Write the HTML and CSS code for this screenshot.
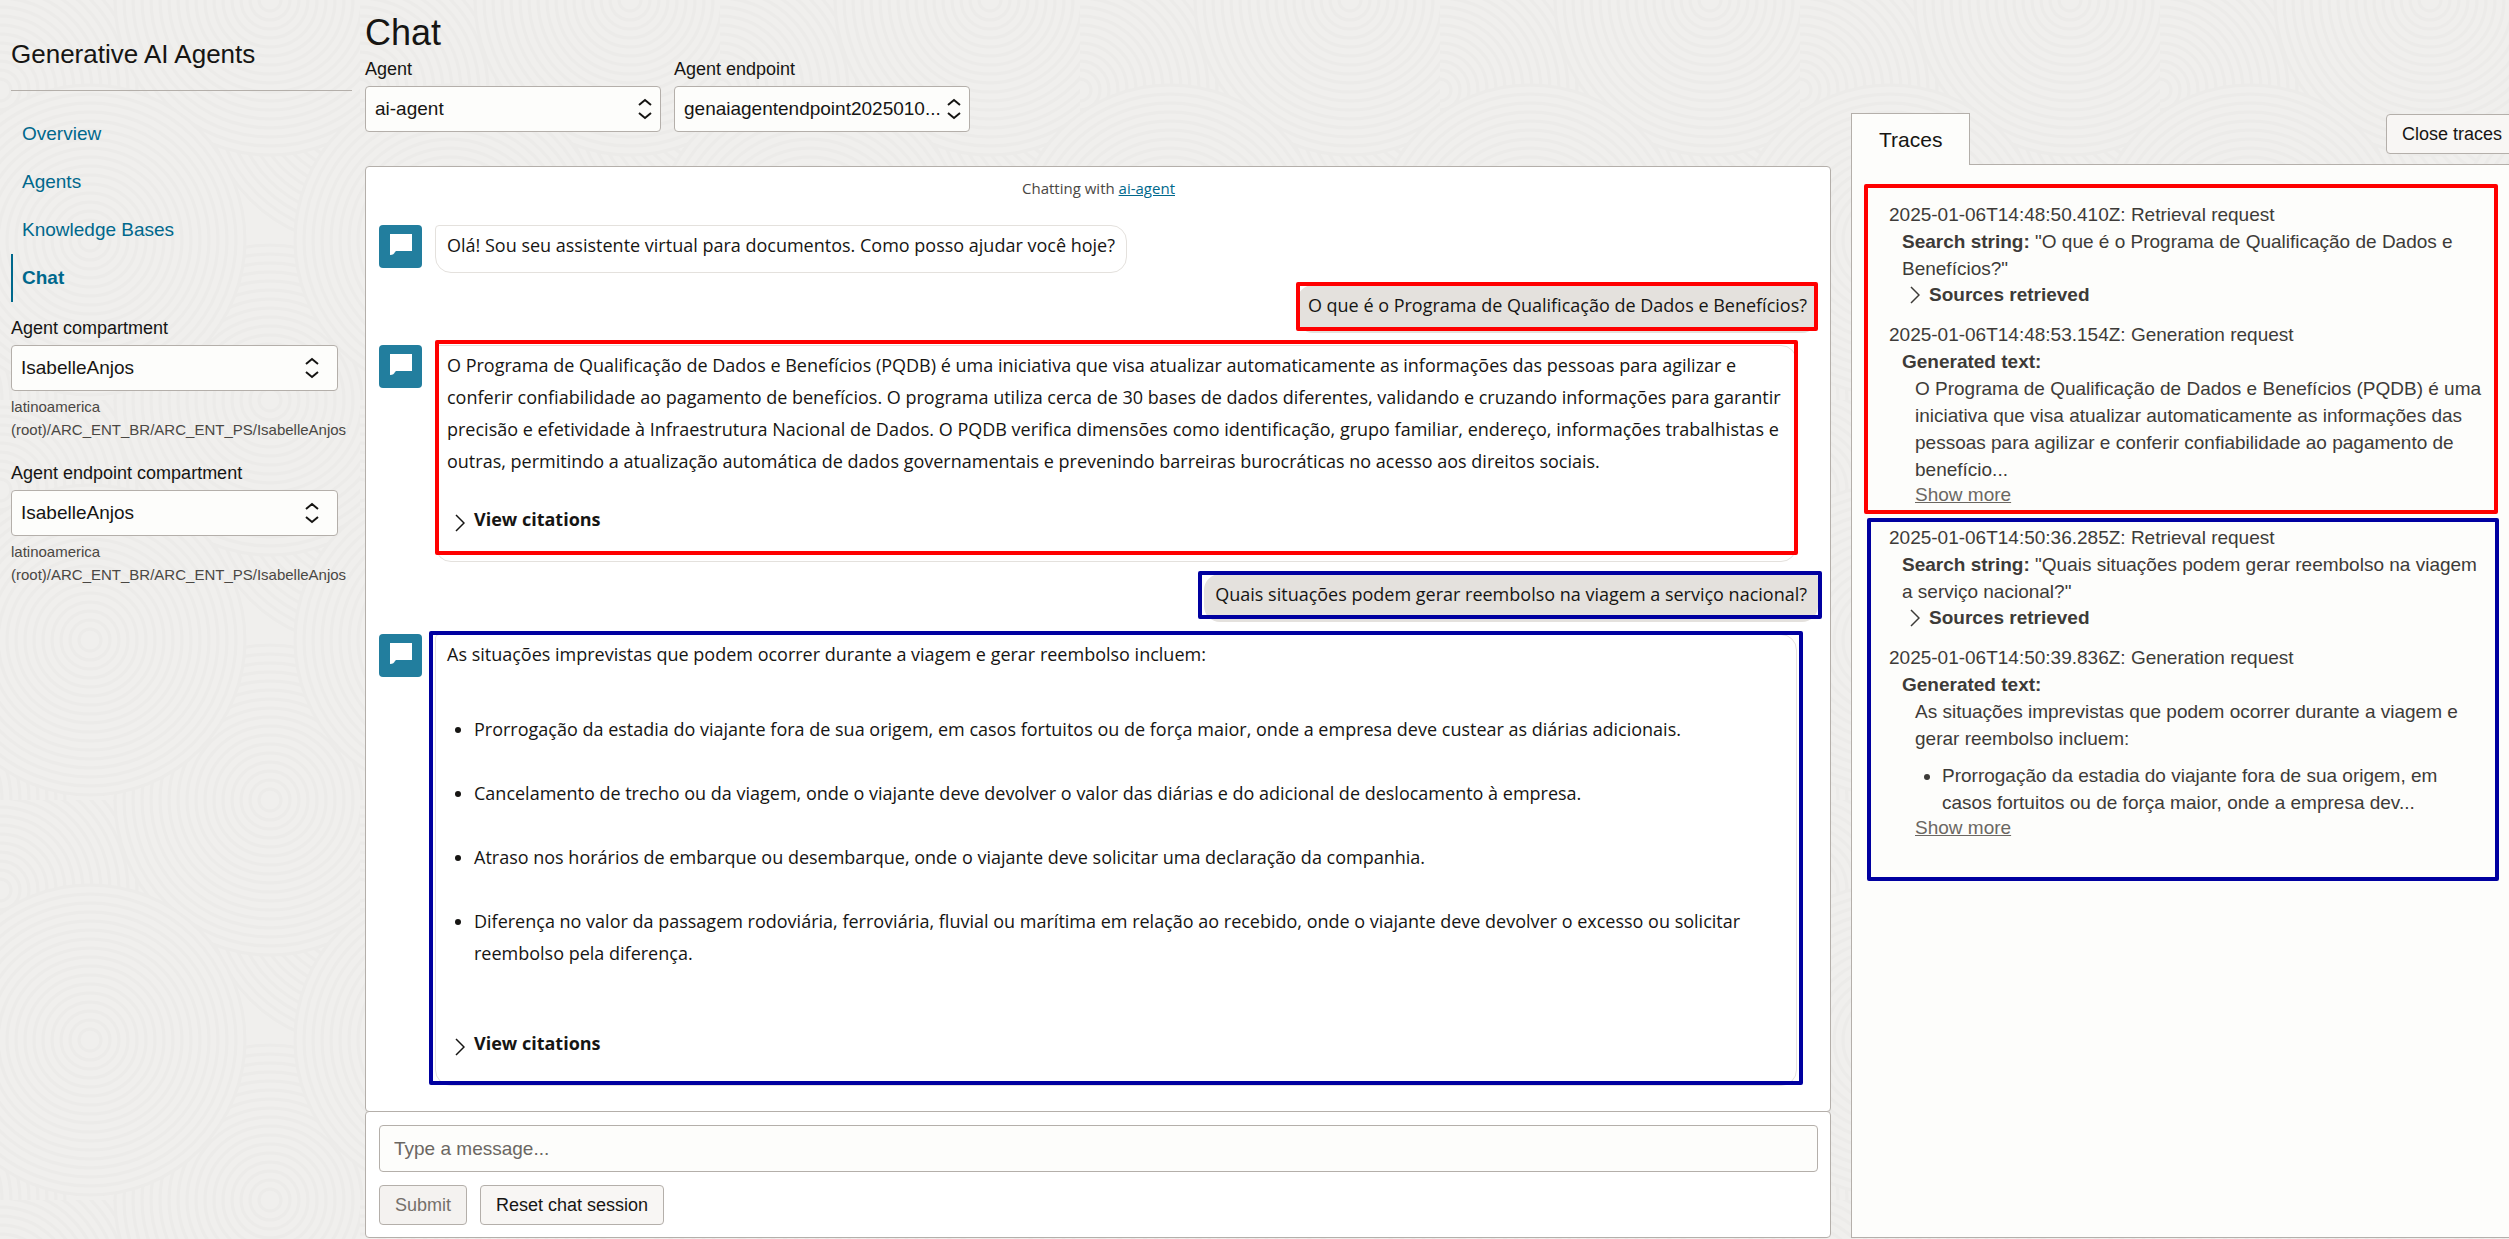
FILE: index.html
```html
<!DOCTYPE html>
<html lang="en">
<head>
<meta charset="utf-8">
<meta name="viewport" content="width=device-width, initial-scale=1">
<title>Chat - Generative AI Agents</title>
<link rel="stylesheet" href="styles.css">
</head>
<body>
<svg class="sprite" aria-hidden="true">
  <symbol id="bubble" viewBox="0 0 43 43"><path fill="#fff" d="M11 9h22v17H17l-1 1c-1 2-2 3-5 3z"/></symbol>
  <symbol id="chevron" viewBox="0 0 10 18"><path fill="none" stroke="currentColor" stroke-width="1.5" d="M1 1l8 8-8 8"/></symbol>
</svg>
<div class="layout">
  <aside class="sidebar">
    <h2 class="service">Generative AI Agents</h2>
    <nav class="nav">
      <a href="#overview">Overview</a>
      <a href="#agents">Agents</a>
      <a href="#knowledge">Knowledge Bases</a>
      <a href="#chat" class="active" aria-current="page">Chat</a>
    </nav>
    <div class="field">
      <label for="agent-comp">Agent compartment</label>
      <select id="agent-comp" class="select wide"><option>IsabelleAnjos</option></select>
      <p class="hint">latinoamerica<br>(root)/ARC_ENT_BR/ARC_ENT_PS/IsabelleAnjos</p>
    </div>
    <div class="field">
      <label for="endpoint-comp">Agent endpoint compartment</label>
      <select id="endpoint-comp" class="select wide"><option>IsabelleAnjos</option></select>
      <p class="hint">latinoamerica<br>(root)/ARC_ENT_BR/ARC_ENT_PS/IsabelleAnjos</p>
    </div>
  </aside>

  <main class="main">
    <h1 class="title">Chat</h1>
    <div class="filters">
      <div class="filter">
        <label for="agent">Agent</label>
        <select id="agent" class="select"><option>ai-agent</option></select>
      </div>
      <div class="filter">
        <label for="endpoint">Agent endpoint</label>
        <select id="endpoint" class="select"><option>genaiagentendpoint2025010...</option></select>
      </div>
    </div>

    <section class="messages">
      <p class="chatting">Chatting with <a href="#agent">ai-agent</a></p>
      <div class="thread">
        <div class="bot">
          <span class="avatar"><svg><use href="#bubble"/></svg></span>
          <div class="bubble"><p>Olá! Sou seu assistente virtual para documentos. Como posso ajudar você hoje?</p></div>
        </div>
        <div class="user">
          <p>O que é o Programa de Qualificação de Dados e Benefícios?</p>
          <span class="mark red mark-q1"></span>
        </div>
        <div class="bot">
          <span class="avatar"><svg><use href="#bubble"/></svg></span>
          <div class="bubble">
            <p>O Programa de Qualificação de Dados e Benefícios (PQDB) é uma iniciativa que visa atualizar automaticamente as informações das pessoas para agilizar e conferir confiabilidade ao pagamento de benefícios. O programa utiliza cerca de 30 bases de dados diferentes, validando e cruzando informações para garantir precisão e efetividade à Infraestrutura Nacional de Dados. O PQDB verifica dimensões como identificação, grupo familiar, endereço, informações trabalhistas e outras, permitindo a atualização automática de dados governamentais e prevenindo barreiras burocráticas no acesso aos direitos sociais.</p>
            <button type="button" class="citations"><svg><use href="#chevron"/></svg>View citations</button>
            <span class="mark red mark-a1"></span>
          </div>
        </div>
        <div class="user">
          <p>Quais situações podem gerar reembolso na viagem a serviço nacional?</p>
          <span class="mark blue mark-q2"></span>
        </div>
        <div class="bot">
          <span class="avatar"><svg><use href="#bubble"/></svg></span>
          <div class="bubble">
            <p>As situações imprevistas que podem ocorrer durante a viagem e gerar reembolso incluem:</p>
            <ul class="answers">
              <li>Prorrogação da estadia do viajante fora de sua origem, em casos fortuitos ou de força maior, onde a empresa deve custear as diárias adicionais.</li>
              <li>Cancelamento de trecho ou da viagem, onde o viajante deve devolver o valor das diárias e do adicional de deslocamento à empresa.</li>
              <li>Atraso nos horários de embarque ou desembarque, onde o viajante deve solicitar uma declaração da companhia.</li>
              <li>Diferença no valor da passagem rodoviária, ferroviária, fluvial ou marítima em relação ao recebido, onde o viajante deve devolver o excesso ou solicitar reembolso pela diferença.</li>
            </ul>
            <button type="button" class="citations"><svg><use href="#chevron"/></svg>View citations</button>
            <span class="mark blue mark-a2"></span>
          </div>
        </div>
      </div>
    </section>
    <form class="composer">
      <input type="text" class="message" placeholder="Type a message..." aria-label="Message">
      <div class="actions">
        <button type="submit" class="btn" disabled>Submit</button>
        <button type="button" class="btn">Reset chat session</button>
      </div>
    </form>
  </main>

  <aside class="traces">
    <div class="tabbar">
      <button type="button" class="tab">Traces</button>
      <button type="button" class="btn close">Close traces</button>
    </div>
    <div class="panel">
      <section class="group">
        <div class="trace">
          <p>2025-01-06T14:48:50.410Z: Retrieval request</p>
          <div class="detail">
            <p><b>Search string:</b> "O que é o Programa de Qualificação de Dados e Benefícios?"</p>
            <button type="button" class="sources"><svg><use href="#chevron"/></svg>Sources retrieved</button>
          </div>
        </div>
        <div class="trace">
          <p>2025-01-06T14:48:53.154Z: Generation request</p>
          <div class="detail">
            <p><b>Generated text:</b></p>
            <div class="detail">
              <p>O Programa de Qualificação de Dados e Benefícios (PQDB) é uma iniciativa que visa atualizar automaticamente as informações das pessoas para agilizar e conferir confiabilidade ao pagamento de benefício...</p>
              <button type="button" class="more">Show more</button>
            </div>
          </div>
        </div>
        <span class="mark red mark-t1"></span>
      </section>
      <section class="group">
        <div class="trace">
          <p>2025-01-06T14:50:36.285Z: Retrieval request</p>
          <div class="detail">
            <p><b>Search string:</b> "Quais situações podem gerar reembolso na viagem a serviço nacional?"</p>
            <button type="button" class="sources"><svg><use href="#chevron"/></svg>Sources retrieved</button>
          </div>
        </div>
        <div class="trace">
          <p>2025-01-06T14:50:39.836Z: Generation request</p>
          <div class="detail">
            <p><b>Generated text:</b></p>
            <div class="detail">
              <p>As situações imprevistas que podem ocorrer durante a viagem e gerar reembolso incluem:</p>
              <ul class="excerpt"><li>Prorrogação da estadia do viajante fora de sua origem, em casos fortuitos ou de força maior, onde a empresa dev...</li></ul>
              <button type="button" class="more">Show more</button>
            </div>
          </div>
        </div>
        <span class="mark blue mark-t2"></span>
      </section>
    </div>
  </aside>
</div>
</body>
</html>
```
FILE: styles.css
```css
* { box-sizing: border-box; }

body {
  margin: 0;
  color: #161513;
  font: 18px/24px "Liberation Sans", Arial, sans-serif;
  background-color: #f0efed;
  background-image: url("data:image/svg+xml,%3Csvg xmlns='http://www.w3.org/2000/svg' width='360' height='400'%3E%3Cdefs%3E%3Cg id='d' fill='none' stroke='%23ecebe9' stroke-width='3'%3E%3Ccircle r='155' fill='%23f0efed'/%3E%3Ccircle r='146'/%3E%3Ccircle r='137'/%3E%3Ccircle r='128'/%3E%3Ccircle r='119'/%3E%3Ccircle r='110'/%3E%3Ccircle r='101'/%3E%3Ccircle r='92'/%3E%3Ccircle r='83'/%3E%3Ccircle r='74'/%3E%3Ccircle r='65'/%3E%3Ccircle r='56'/%3E%3Ccircle r='47'/%3E%3Ccircle r='38'/%3E%3Ccircle r='29'/%3E%3Ccircle r='20'/%3E%3Ccircle r='11'/%3E%3C/g%3E%3C/defs%3E%3Cuse href='%23d' x='0' y='90'/%3E%3Cuse href='%23d' x='360' y='90'/%3E%3Cuse href='%23d' x='270' y='0'/%3E%3Cuse href='%23d' x='270' y='400'/%3E%3Cuse href='%23d' x='-90' y='400'/%3E%3Cuse href='%23d' x='90' y='240'/%3E%3Cuse href='%23d' x='450' y='240'/%3E%3C/svg%3E");
}

h1, h2, p, ul { margin: 0; padding: 0; font-weight: 400; }
button, select, input { font: inherit; color: inherit; margin: 0; }
.sprite { display: none; }

.layout {
  display: grid;
  grid-template-columns: 341px minmax(0, 1fr) 658px;
  min-height: 100vh;
  padding: 0 0 1px 11px;
  overflow: hidden;
}

/* Sidebar */
.sidebar { padding-top: 38px; }
.service {
  padding-bottom: 20px;
  border-bottom: 1px solid #b4afaa;
  font-size: 26px;
  line-height: 32px;
}
.nav { display: flex; flex-direction: column; padding: 19px 0 14px; }
.nav a {
  padding-left: 11px;
  font-size: 19px;
  line-height: 48px;
  color: #00688c;
  text-decoration: none;
}
.nav .active { padding-left: 9px; border-left: 2px solid #00688c; font-weight: 700; }
.field { width: 327px; padding-bottom: 20px; }
label { display: block; }
.hint { padding-top: 4px; font-size: 15px; line-height: 23px; color: #4a4743; white-space: nowrap; }

.select {
  display: block;
  width: 100%;
  height: 46px;
  margin-top: 5px;
  padding: 0 28px 0 9px;
  border: 1px solid #b4afaa;
  border-radius: 4px;
  appearance: none;
  font-size: 19px;
  background: #fdfdfb url("data:image/svg+xml,%3Csvg xmlns='http://www.w3.org/2000/svg' width='14' height='22' fill='none' stroke='%23161513' stroke-width='2'%3E%3Cpath d='M1 7l6-5 6 5M1 15l6 5 6-5'/%3E%3C/svg%3E") no-repeat right 8px center;
}
.select.wide { background-position: right 18px center; }

/* Main column */
.main { display: flex; flex-direction: column; padding: 13px 20px 0 13px; }
.title { margin-bottom: 4px; font-size: 36px; line-height: 40px; }
.filters { display: flex; gap: 13px; margin-bottom: 34px; }
.filter { width: 296px; }

.messages, .composer { border: 1px solid #b4afaa; border-radius: 4px; background: #fff; }
.messages {
  flex: 1;
  padding: 9px 12px 23px 13px;
  font-family: "Open Sans", "Noto Sans", sans-serif;
  line-height: 32px;
}
.chatting { margin-bottom: 25px; font-size: 15px; line-height: 24px; text-align: center; color: #4a4743; }
.chatting a { color: #00688c; }
.thread { display: flex; flex-direction: column; gap: 12px; }

.bot { display: flex; align-items: flex-start; gap: 13px; padding-right: 21px; }
.avatar { flex: none; width: 43px; height: 43px; border-radius: 4px; background: #227e9e; }
.avatar svg { display: block; width: 43px; height: 43px; }
.bubble {
  position: relative;
  padding: 3px 11px 11px;
  border: 1px solid #e4e1dd;
  border-radius: 4px 16px 16px 16px;
}
.user {
  position: relative;
  align-self: flex-end;
  padding: 4px 11px 12px;
  border-radius: 16px 4px 16px 16px;
  background: #e4e1dd;
}
.citations {
  display: flex;
  align-items: center;
  gap: 9px;
  margin: 26px 0 15px;
  padding: 0 0 0 8px;
  border: 0;
  background: none;
  font-weight: 700;
}
.citations svg { width: 10px; height: 18px; margin-top: 8px; }
.answers { padding: 43px 0 32px 27px; }
.answers li + li { margin-top: 32px; }

.composer { margin-top: -1px; padding: 13px 12px 12px 13px; }
.message {
  display: block;
  width: 100%;
  height: 47px;
  padding: 0 14px;
  border: 1px solid #b4afaa;
  border-radius: 4px;
  background: #fdfdfb;
  font-size: 19px;
}
.message::placeholder { color: #6b6762; opacity: 1; }
.actions { display: flex; gap: 13px; margin-top: 13px; }
.btn {
  height: 40px;
  padding: 0 15px;
  border: 1px solid #b4afaa;
  border-radius: 4px;
  background: #f8f6f4;
  white-space: nowrap;
}
.btn:disabled { background: #f4f2f0; color: #74706b; }

/* Traces */
.traces {
  display: flex;
  flex-direction: column;
  margin-right: -9px;
  padding-top: 113px;
  font-size: 19px;
  line-height: 27px;
  color: #3d3b38;
}
.tabbar { display: flex; justify-content: space-between; align-items: flex-start; }
.tab {
  position: relative;
  z-index: 1;
  height: 52px;
  margin-bottom: -1px;
  padding: 0 27px;
  border: 1px solid #b4afaa;
  border-bottom: 0;
  background: #fdfdfb;
  color: #161513;
  font-size: 21px;
}
.close { margin-top: 1px; color: #161513; font-size: 18px; }
.panel {
  flex: 1;
  display: flex;
  flex-direction: column;
  gap: 17px;
  padding: 36px 30px 36px 37px;
  border: 1px solid #b4afaa;
  background: #fdfdfb;
}
.group { position: relative; display: flex; flex-direction: column; gap: 14px; }
.detail { padding-left: 13px; }
.sources, .more { display: block; padding: 0; border: 0; background: none; }
.sources { display: flex; align-items: center; gap: 9px; height: 25px; padding-left: 8px; font-weight: 700; }
.sources svg { width: 10px; height: 18px; }
.more { height: 24px; line-height: 24px; color: #6b6762; text-decoration: underline; }
.excerpt { padding: 10px 0 0 27px; }

/* Highlight frames laid over questions, answers and their traces */
.mark { position: absolute; border: 4px solid; border-radius: 2px; pointer-events: none; }
.red { border-color: #f00; }
.blue { border-color: #0000a0; }
.mark-q1 { inset: -3px 0 2px -1px; }
.mark-a1 { inset: -6px -2px 6px -1px; }
.mark-q2 { inset: -3px -4px 3px -6px; }
.mark-a2 { inset: -4px -7px 0 -7px; }
.mark-t1 { inset: -17px -11px -7px -25px; }
.mark-t2 { inset: -6px -12px -41px -22px; }
```
